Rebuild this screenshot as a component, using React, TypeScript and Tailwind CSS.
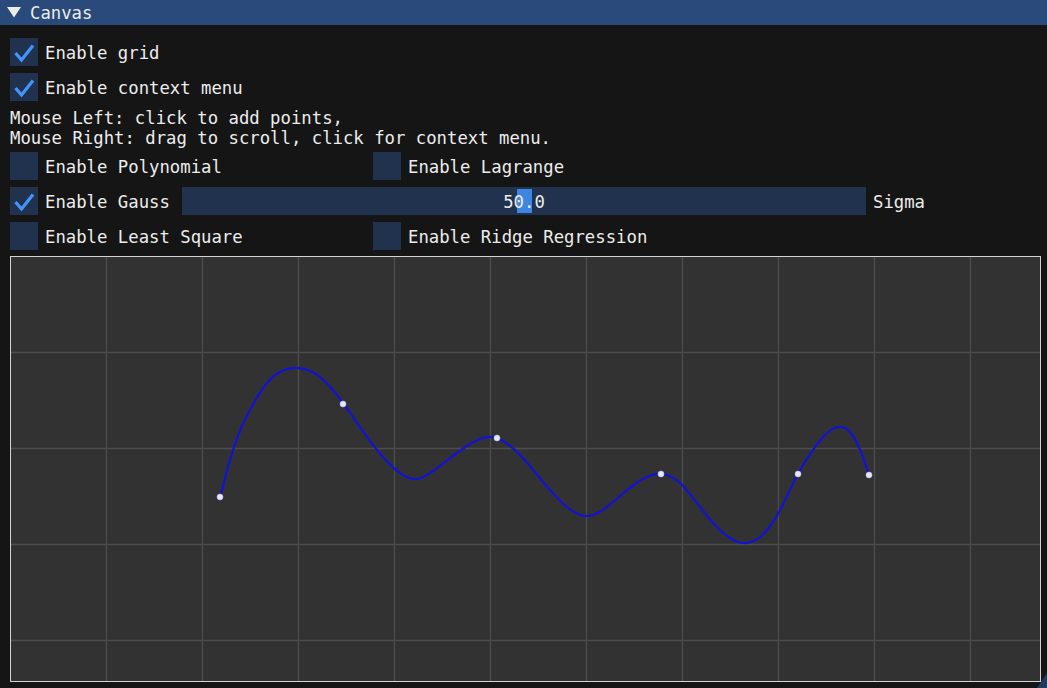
import React from "react"

const curvePts: [number, number][] = [
  [219.5, 500], [233, 450], [250, 410], [267, 383], [295, 368], [320, 377], [343, 403],
  [360, 427], [400, 473], [416, 479], [433, 471], [467, 446], [490, 437], [517, 452],
  [550, 490], [567, 507], [587, 516], [613, 502], [635, 484], [661, 474],
  [680, 483], [700, 507], [720, 530], [743, 543], [767, 530], [780, 510], [798, 474],
  [813, 450], [838, 427], [857, 443], [869, 475],
]

const dots: [number, number][] = [
  [220, 497], [343, 404], [497, 438], [661, 474], [798, 474], [869, 475],
]

// natural cubic spline y(x), sampled as a polyline
function splinePath(p: [number, number][]) {
  const n = p.length
  const x = p.map((q) => q[0])
  const y = p.map((q) => q[1])
  const h: number[] = []
  for (let i = 0; i < n - 1; i++) h.push(x[i + 1] - x[i])
  const a = new Array(n).fill(0)
  const b = new Array(n).fill(0)
  const c = new Array(n).fill(0)
  const r = new Array(n).fill(0)
  b[0] = 1
  b[n - 1] = 1
  for (let i = 1; i < n - 1; i++) {
    a[i] = h[i - 1]
    b[i] = 2 * (h[i - 1] + h[i])
    c[i] = h[i]
    r[i] = 6 * ((y[i + 1] - y[i]) / h[i] - (y[i] - y[i - 1]) / h[i - 1])
  }
  for (let i = 1; i < n; i++) {
    const m = a[i] / b[i - 1]
    b[i] -= m * c[i - 1]
    r[i] -= m * r[i - 1]
  }
  const M = new Array(n).fill(0)
  M[n - 1] = r[n - 1] / b[n - 1]
  for (let i = n - 2; i >= 0; i--) M[i] = (r[i] - c[i] * M[i + 1]) / b[i]

  let d = `M${x[0]},${y[0]}`
  for (let i = 0; i < n - 1; i++) {
    const steps = Math.max(2, Math.ceil(h[i] / 2))
    for (let s = 1; s <= steps; s++) {
      const t = x[i] + (h[i] * s) / steps
      const A = (x[i + 1] - t) / h[i]
      const B = (t - x[i]) / h[i]
      const v =
        A * y[i] + B * y[i + 1] + ((A * A * A - A) * M[i] + (B * B * B - B) * M[i + 1]) * (h[i] * h[i]) / 6
      d += ` L${t.toFixed(1)},${v.toFixed(1)}`
    }
  }
  return d
}

function Checkbox({ checked, label }: { checked?: boolean; label: string }) {
  return (
    <div className="flex items-center h-[28px]">
      <div className="w-[28px] h-[28px] bg-[#20324d] shrink-0">
        {checked && (
          <svg width="28" height="28" viewBox="0 0 28 28">
            <path d="M5.5 15 L11.5 22 L23 7.5" fill="none" stroke="#4296fa" strokeWidth="3.2" strokeLinejoin="miter" />
          </svg>
        )}
      </div>
      <span className="ml-[7px] pt-[2px] whitespace-pre">{label}</span>
    </div>
  )
}

export default function App() {
  const vLines = Array.from({ length: 10 }, (_, i) => 10.5 + 96 * (i + 1))
  const hLines = Array.from({ length: 4 }, (_, i) => 256.5 + 96 * (i + 1))

  return (
    <div className="relative w-[1047px] h-[688px] overflow-hidden bg-[#151515] text-[#ececec] text-[17.3px] leading-[20px] [font-family:'DejaVu_Sans_Mono',monospace]">
      <div className="h-[25px] bg-[#294a7a] flex items-center">
        <svg width="14" height="11" viewBox="0 0 14 11" className="ml-[7px]">
          <polygon points="0,0 14,0 7,10.5" fill="#ececec" />
        </svg>
        <span className="ml-[9px] pt-[1px]">Canvas</span>
      </div>

      <div className="px-[10px] pt-[13px] flex flex-col">
        <Checkbox checked label="Enable grid" />
        <div className="mt-[7px]">
          <Checkbox checked label="Enable context menu" />
        </div>
        <div className="mt-[7px] h-[40px] whitespace-pre">
          <div>Mouse Left: click to add points,</div>
          <div>Mouse Right: drag to scroll, click for context menu.</div>
        </div>
        <div className="mt-[4px] flex">
          <div className="w-[363px]">
            <Checkbox label="Enable Polynomial" />
          </div>
          <Checkbox label="Enable Lagrange" />
        </div>
        <div className="mt-[7px] flex items-center h-[28px]">
          <div className="w-[172px]">
            <Checkbox checked label="Enable Gauss" />
          </div>
          <div className="relative w-[684px] h-[28px] bg-[#20324d] flex items-center justify-center">
            <div className="absolute left-[335px] top-[2px] w-[15px] h-[24px] bg-[#3d85e0]" />
            <span className="relative pt-[2px]">50.0</span>
          </div>
          <span className="ml-[7px] pt-[2px]">Sigma</span>
        </div>
        <div className="mt-[7px] flex">
          <div className="w-[363px]">
            <Checkbox label="Enable Least Square" />
          </div>
          <Checkbox label="Enable Ridge Regression" />
        </div>

        <div className="mt-[6px] w-[1031px] h-[426px] border border-[#d4d4d4] bg-[#323232]">
          <svg width="1029" height="424" viewBox="11 257 1029 424" className="block">
            {vLines.map((x) => (
              <line key={"v" + x} x1={x} y1={257} x2={x} y2={681} stroke="#4d4d4d" strokeWidth="1.3" />
            ))}
            {hLines.map((y) => (
              <line key={"h" + y} x1={11} y1={y} x2={1040} y2={y} stroke="#4d4d4d" strokeWidth="1.3" />
            ))}
            <path d={splinePath(curvePts)} fill="none" stroke="#1212d6" strokeWidth="2.2" strokeLinejoin="round" />
            {dots.map(([x, y]) => (
              <circle key={x} cx={x} cy={y} r="3" fill="#e6e6ff" stroke="#b8b8ee" strokeWidth="0.6" />
            ))}
          </svg>
        </div>
      </div>

      <svg width="12" height="15" viewBox="0 0 12 15" className="absolute right-0 bottom-0">
        <polygon points="12,0 12,15 2,15" fill="#233a5c" />
      </svg>
    </div>
  )
}
